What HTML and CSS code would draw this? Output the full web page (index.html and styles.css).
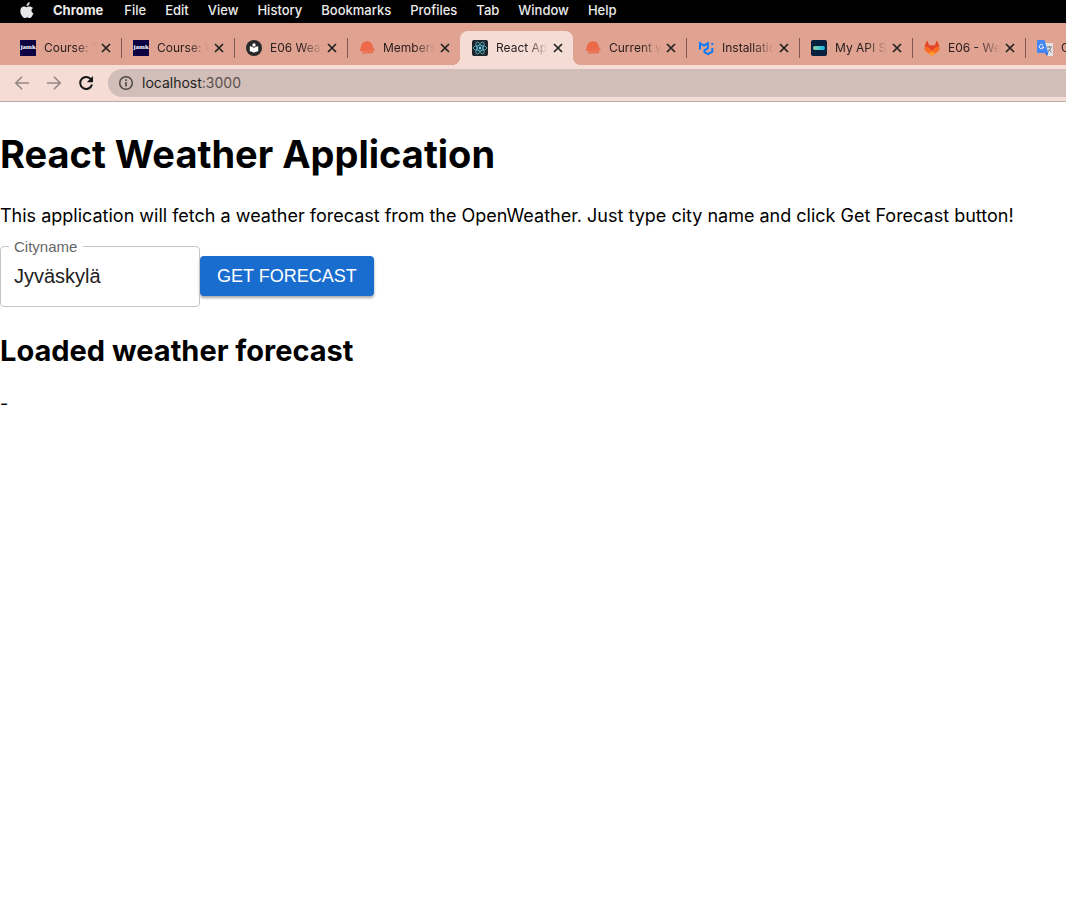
FILE: index.html
```html
<!DOCTYPE html>
<html lang="en">
<head>
<meta charset="utf-8">
<title>React App</title>
<link rel="stylesheet" href="styles.css">
</head>
<body>
<svg class="defs" aria-hidden="true">
  <symbol id="close" viewBox="0 0 16 16"><path d="M4 4l8 8M12 4l-8 8" fill="none" stroke="#222" stroke-width="1.7"/></symbol>
  <symbol id="octo" viewBox="0 0 16 16"><path fill="#ec6a4a" d="M1.800 8.600C1.500 4.500 4.200 1.300 8 1.300c3.800 0 6 2.700 5.800 6.200 1.200.6 2 2 1.800 4.100-.4-.7-.9-1.200-1.600-1.300.3 1.100 0 2.400-.8 3.300h-1.400l-.5-1.100-.6 1.100H9.200L8.500 12.500l-.9 1.100H3l.3-1.400 1.200-1C2.600 11.700 1 11 .4 9.300c.5.200 1 0 1.400-.7z"/><path d="M4.500 12.500l2-1M8 12l.5-1.200M11 12.300l-.4-1.500M13 9.500l.3 1.500" stroke="#e2a08e" stroke-width=".7"/></symbol>
</svg>

<header>
  <nav class="menubar" aria-label="System menu">
    <svg class="apple" viewBox="0 0 14 17" aria-hidden="true"><path fill="#e8e8e8" d="M9.700.3c.1 1-.3 2-.9 2.700-.6.700-1.500 1.200-2.300 1.100-.1-1 .3-1.900.9-2.600C8 .8 9 .3 9.700.3zM13.100 6c-1 .6-1.600 1.500-1.600 2.600 0 1.300.8 2.300 1.900 2.700-.3 1-.8 2-1.400 2.900-.7 1-1.300 1.900-2.300 1.900-1 0-1.300-.6-2.500-.6s-1.500.6-2.500.6-1.700-.9-2.400-1.900C.9 12.500.3 10.600.3 8.900c0-2.900 1.800-4.400 3.600-4.400 1 0 1.900.7 2.500.7s1.600-.7 2.900-.7c1.500 0 2.900.6 3.800 1.500z"/></svg>
    <b class="menu-app">Chrome</b><span>File</span><span>Edit</span><span>View</span><span>History</span><span>Bookmarks</span><span>Profiles</span><span>Tab</span><span>Window</span><span>Help</span>
  </nav>

  <div class="tabs">
    <div class="tab"><span class="icon jamk">jamk</span><span class="title">Course: T</span><button class="close" aria-label="Close tab"><svg class="icon"><use href="#close"/></svg></button></div>
    <div class="tab"><span class="icon jamk">jamk</span><span class="title">Course: W</span><button class="close" aria-label="Close tab"><svg class="icon"><use href="#close"/></svg></button></div>
    <div class="tab"><svg class="icon" viewBox="0 0 16 16" aria-hidden="true"><circle cx="8" cy="8" r="8" fill="#292929"/><circle cx="8" cy="5" r="1.700" fill="#fff"/><path fill="#fff" d="M3.800 6.200Q6.500 6.400 8 8q1.500-1.600 4.200-1.800v5Q9.800 11.400 8 12.800q-1.800-1.400-4.200-1.600z"/></svg><span class="title">E06 Weat</span><button class="close" aria-label="Close tab"><svg class="icon"><use href="#close"/></svg></button></div>
    <div class="tab before-active"><svg class="icon" aria-hidden="true"><use href="#octo"/></svg><span class="title">Members</span><button class="close" aria-label="Close tab"><svg class="icon"><use href="#close"/></svg></button></div>
    <div class="tab active"><svg class="icon" viewBox="0 0 16 16" aria-hidden="true"><rect width="16" height="16" rx="2" fill="#202225"/><g fill="none" stroke="#55b9d2" stroke-width=".8"><ellipse cx="8" cy="8" rx="6.800" ry="2.600"/><ellipse cx="8" cy="8" rx="6.800" ry="2.600" transform="rotate(60 8 8)"/><ellipse cx="8" cy="8" rx="6.800" ry="2.600" transform="rotate(120 8 8)"/></g><circle cx="8" cy="8" r="1.300" fill="#61dafb"/></svg><span class="title">React App</span><button class="close" aria-label="Close tab"><svg class="icon"><use href="#close"/></svg></button></div>
    <div class="tab"><svg class="icon" aria-hidden="true"><use href="#octo"/></svg><span class="title">Current w</span><button class="close" aria-label="Close tab"><svg class="icon"><use href="#close"/></svg></button></div>
    <div class="tab"><svg class="icon" viewBox="0 0 16 16" aria-hidden="true"><path d="M2 9.500V3.300l4 2.400 3.800-2.400v5L6.500 10.200v2l3.600 1.900 4.200-2.500V8M14.300 3v2" fill="none" stroke="#087bff" stroke-width="2"/></svg><span class="title">Installatio</span><button class="close" aria-label="Close tab"><svg class="icon"><use href="#close"/></svg></button></div>
    <div class="tab"><svg class="icon" viewBox="0 0 16 16" aria-hidden="true"><defs><linearGradient id="pill"><stop stop-color="#8bd6a0"/><stop offset="1" stop-color="#10b6ee"/></linearGradient></defs><rect width="16" height="16" rx="2" fill="#05213d"/><rect x="2" y="6" width="12" height="4" rx="2" fill="url(#pill)"/></svg><span class="title">My API S</span><button class="close" aria-label="Close tab"><svg class="icon"><use href="#close"/></svg></button></div>
    <div class="tab"><svg class="icon" viewBox="0 0 16 16" aria-hidden="true"><path fill="#fc6d26" d="M.7 6.200L3 .5 5.200 5.500h5.600L13 .5l2.300 5.700c.7 2.300.1 4.200-1.600 5.500L8 15.800 2.300 11.700C.6 10.400 0 8.500.7 6.200z"/><path fill="#e24329" d="M.7 6.200L3 .5l2.200 5h5.600l2.200-5 2.300 5.700c-2 .2-3.400 1-4.500 1.900L8 10.500 5.200 8.100C4.100 7.200 2.700 6.400.7 6.200z"/><path fill="#fca326" d="M5.200 13.800L8 11.500l2.800 2.300L8 15.800z"/></svg><span class="title">E06 - We</span><button class="close" aria-label="Close tab"><svg class="icon"><use href="#close"/></svg></button></div>
    <div class="tab"><svg class="icon" viewBox="0 0 16 16" aria-hidden="true"><path fill="#e1e3e6" d="M7 3h8q1 0 1 1v11q0 1-1 1h-4.500z"/><path fill="#3367d6" d="M8 13h3.300L10 16z"/><path fill="#4285f4" d="M1 0h6.500l3.800 13H1q-1 0-1-1V1q0-1 1-1z"/><path d="M6.200 5.200A2.200 2.200 0 1 0 6.700 7H4.700" fill="none" stroke="#fff" stroke-width="1"/><path d="M10 7h5M12.400 6v1.500M14 7.500q-.7 2.500-3 4.500M11.500 9l3 3.500" fill="none" stroke="#66747c" stroke-width=".9"/></svg><span class="title">G</span><button class="close" aria-label="Close tab"><svg class="icon"><use href="#close"/></svg></button></div>
  </div>

  <div class="toolbar">
    <button class="tool" aria-label="Back"><svg class="icon" viewBox="0 0 16 16"><path d="M15 8H2M8 1.800L1.800 8 8 14.200" fill="none" stroke="#958884" stroke-width="1.600"/></svg></button>
    <button class="tool" aria-label="Forward"><svg class="icon" viewBox="0 0 16 16"><path d="M1 8h13M8 1.800L14.200 8 8 14.200" fill="none" stroke="#958884" stroke-width="1.600"/></svg></button>
    <button class="tool" aria-label="Reload"><svg class="icon" viewBox="0 0 16 16"><path d="M13.300 4.800A6 6 0 1 0 14 9.500" fill="none" stroke="#171717" stroke-width="2"/><path d="M15 1v6.200H8.800z" fill="#171717"/></svg></button>
    <div class="address">
      <svg class="icon" viewBox="0 0 16 16" aria-hidden="true"><circle cx="8" cy="8" r="6.300" fill="none" stroke="#4c4545" stroke-width="1.500"/><path d="M8 7v4.500M8 4.300V6" stroke="#4c4545" stroke-width="1.600"/></svg>
      <span class="url">localhost<span class="port">:3000</span></span>
    </div>
  </div>
</header>

<main>
  <h1>React Weather Application</h1>
  <p class="intro">This application will fetch a weather forecast from the OpenWeather. Just type city name and click Get Forecast button!</p>
  <form class="search">
    <div class="field">
      <label for="city">Cityname</label>
      <input id="city" type="text" value="Jyväskylä">
    </div>
    <button class="submit" type="button">GET FORECAST</button>
  </form>
  <h2>Loaded weather forecast</h2>
  <p>-</p>
</main>
</body>
</html>
```
FILE: styles.css
```css
* { box-sizing: border-box; }
body {
  margin: 0;
  background: #fff;
  color: #000;
  font-family: Inter, sans-serif;
  overflow-x: hidden;
}
button { border: 0; padding: 0; background: none; font: inherit; }
.defs { position: absolute; width: 0; height: 0; }
.icon { display: block; flex: none; width: 16px; height: 16px; }

.menubar {
  display: flex;
  align-items: center;
  gap: 19px;
  height: 23px;
  padding: 0 20px 3px;
  background: #000;
  color: #ececec;
  font-size: 13px;
  line-height: 16px;
  font-weight: 500;
  white-space: nowrap;
}
.apple { width: 14px; height: 17px; }
.menu-app { margin-right: 2px; font-weight: 700; }

.tabs {
  display: flex;
  height: 42px;
  padding: 8px 0 0 8px;
  background: #e0a291;
  overflow: hidden;
}
.tab {
  position: relative;
  display: flex;
  flex: none;
  align-items: center;
  width: 113px;
  padding: 0 7px 0 12px;
  color: #2a2020;
  font-size: 12px;
}
.tab::after {
  content: "";
  position: absolute;
  top: 7px;
  right: -1px;
  width: 1px;
  height: 20px;
  background: #7c5a52;
}
.tab.active {
  background: #f5ddd5;
  border-radius: 8px 8px 0 0;
}
.tab.before-active::after { display: none; }
.tab.active::before,
.tab.active::after {
  content: "";
  position: absolute;
  top: auto;
  bottom: 0;
  width: 8px;
  height: 8px;
}
.tab.active::before { left: -8px; background: radial-gradient(circle at 0 0, transparent 8px, #f5ddd5 8px); }
.tab.active::after { right: -8px; background: radial-gradient(circle at 100% 0, transparent 8px, #f5ddd5 8px); }
.title {
  flex: 1;
  min-width: 0;
  margin: 0 2px 0 8px;
  padding-bottom: 1px;
  overflow: hidden;
  white-space: nowrap;
  -webkit-mask-image: linear-gradient(to right, #000 60%, transparent);
  mask-image: linear-gradient(to right, #000 60%, transparent);
}
.jamk {
  background: #0d0342;
  color: #fff;
  font: bold 7px/15px "Liberation Serif", serif;
  text-align: center;
}

.toolbar {
  display: flex;
  align-items: center;
  height: 37px;
  padding: 0 0 1px 14px;
  gap: 16px;
  background: #f5ddd5;
  border-bottom: 1px solid #b8aaa5;
}
.address {
  display: flex;
  flex: 1;
  align-items: center;
  gap: 8px;
  height: 28px;
  margin-left: -2px;
  padding-left: 10px;
  background: #d2beb8;
  border-radius: 14px 0 0 14px;
  font-size: 14px;
  color: #231e1e;
}
.port { color: #5b504e; }

main { padding-top: 28px; }
h1 { margin: 0; font-size: 38px; line-height: 48px; }
h2 { margin: 27px 0 0; font-size: 29px; line-height: 34px; }
p { margin: 24px 0 0; font-size: 18px; line-height: 24px; }
.intro { margin-top: 26px; }
.search {
  display: flex;
  align-items: center;
  margin-top: 18px;
  font-family: "Liberation Sans", Arial, sans-serif;
}
.field { position: relative; width: 200px; }
.field label {
  position: absolute;
  top: -8px;
  left: 9px;
  padding: 0 6px 0 5px;
  background: #fff;
  color: #666;
  font-size: 15px;
  line-height: 17px;
}
.field input {
  display: block;
  width: 100%;
  height: 61px;
  padding: 0 13px;
  border: 1px solid #c4c4c4;
  border-radius: 4px;
  background: none;
  color: #212121;
  font: 20px "Liberation Sans", Arial, sans-serif;
}
.submit {
  height: 40px;
  padding: 0 17px;
  margin-bottom: 1px;
  border-radius: 4px;
  background: #196dcf;
  color: #fff;
  font-size: 18px;
  box-shadow: 0 2px 3px rgba(0, 0, 0, .35);
}
```
